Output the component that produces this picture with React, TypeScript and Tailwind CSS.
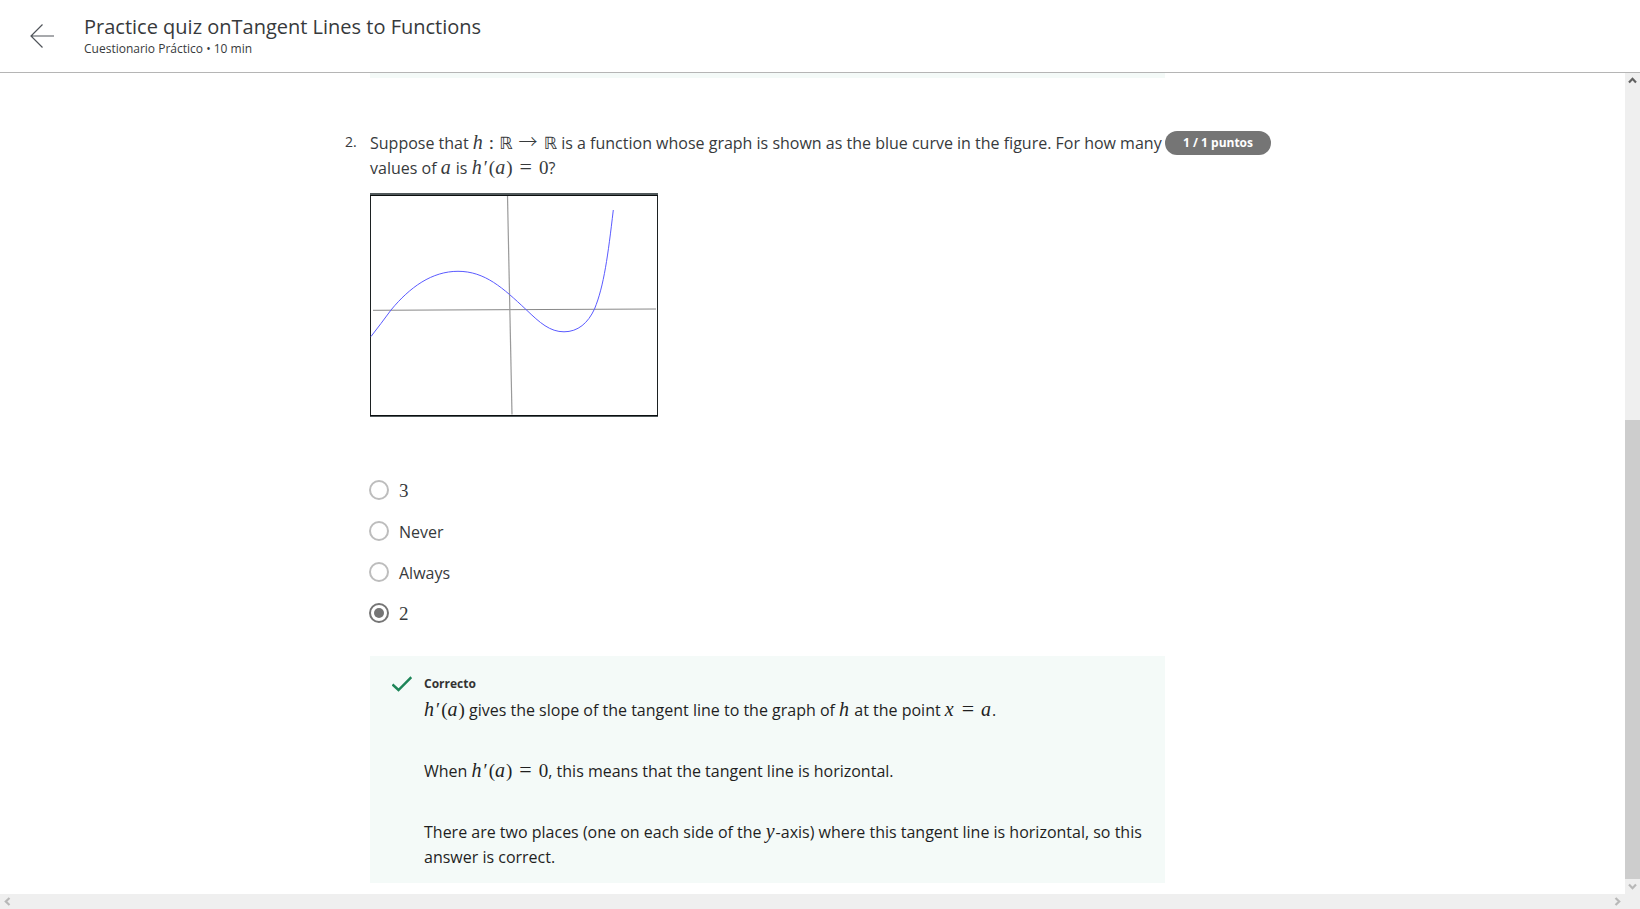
import { ReactNode, useState } from "react";

function Sym({ children }: { children: ReactNode }) {
  return <i className="mr-px font-['Liberation_Serif',serif] text-[20px] leading-none">{children}</i>;
}

function Num({ children }: { children: ReactNode }) {
  return <span className="font-['Liberation_Serif',serif] text-[19px] leading-none">{children}</span>;
}

function Equals() {
  return <span className="mx-[7px] font-['Liberation_Serif',serif] text-[22px] leading-none">=</span>;
}

function Colon() {
  return <span className="mx-[5px] font-['Liberation_Serif',serif] text-[19px] leading-none">:</span>;
}

function Arrow() {
  return <span className="mx-[6px] font-['Noto_Sans_CJK_JP',sans-serif] text-[19px] leading-none font-light">→</span>;
}

function Reals() {
  return <span className="font-['DejaVu_Sans',sans-serif] text-[17px] leading-none">ℝ</span>;
}

function HPrime() {
  return (
    <span className="inline-flex items-baseline whitespace-nowrap">
      <Sym>h</Sym>
      <span className="mx-px">
        <Num>′</Num>
      </span>
      <Num>(</Num>
      <Sym>a</Sym>
      <Num>)</Num>
    </span>
  );
}

function HPrimeZero() {
  return (
    <span className="whitespace-nowrap">
      <HPrime />
      <Equals />
      <Num>0</Num>
    </span>
  );
}

function Graph() {
  return (
    <svg
      role="img"
      aria-label="Graph of h"
      className="mt-3 block h-[224px] w-[288px]"
      viewBox="0 0 288 224"
      fill="none"
    >
      <path d="M0.5 0V224M287.5 0V224" stroke="#1c2122" />
      <path d="M0 1H288M0 223.5H288" stroke="#50585a" strokeWidth="2" />
      <path d="M0 2.5H288M0 222.5H288" stroke="#0b0f10" />
      <path d="M3 117.3L286 116" stroke="#888" />
      <path d="M137.5 3L142 221.500" stroke="#9a9a9a" strokeWidth="1.2" />
      <path
        d="M1 143.500C8 135 14 126 21 117C40 94 62 78.300 88 78.300C115 78.300 133 95 156 116.500C170 130 180 138.800 194 138.800C208 138.800 218 130 224.500 116C234 93 238 62 243.300 17"
        stroke="#5a5aff"
      />
    </svg>
  );
}

const options: { id: string; label: string; math?: boolean }[] = [
  { id: "three", label: "3", math: true },
  { id: "never", label: "Never" },
  { id: "always", label: "Always" },
  { id: "two", label: "2", math: true },
];

function Options() {
  const [selected, setSelected] = useState("two");
  return (
    <fieldset className="-ml-px mt-[63px] flex flex-col gap-[21px]">
      {options.map((o) => (
        <div key={o.id} className="flex h-5 items-center gap-[10px]">
          <input
            id={o.id}
            type="radio"
            name="answer"
            checked={selected === o.id}
            onChange={() => setSelected(o.id)}
            className="size-5 shrink-0 appearance-none rounded-full border-2 border-[#bdbdbd] bg-white bg-clip-content p-[3px] checked:border-[#757575] checked:bg-[#757575]"
          />
          <label htmlFor={o.id} className="pt-0.5">
            {o.math ? <Num>{o.label}</Num> : o.label}
          </label>
        </div>
      ))}
    </fieldset>
  );
}

function Feedback() {
  return (
    <section className="mt-[33px] bg-[#f4faf8] pt-[15px] pr-[14px] pb-[13px] pl-[22px]">
      <div className="flex gap-3">
        <svg className="mt-[5px] h-[16px] w-[20px] shrink-0" viewBox="0 0 20 16" fill="none" aria-hidden="true">
          <path d="M0.500 8.500L6.500 14L19.300 1.200" stroke="#1d8558" strokeWidth="2.400" />
        </svg>
        <div className="flex min-w-0 flex-col gap-px text-[#1f1f1f]">
          <h3 className="text-xs leading-[26px] font-bold text-[#333]">Correcto</h3>
          <div className="flex flex-col gap-9">
            <p>
              <HPrime /> gives the slope of the tangent line to the graph of <Sym>h</Sym> at the point{" "}
              <Sym>x</Sym>
              <Equals />
              <Sym>a</Sym>.
            </p>
            <p>
              When <HPrimeZero />, this means that the tangent line is horizontal.
            </p>
            <p>
              There are two places (one on each side of the <Sym>y</Sym>-axis) where this tangent line is
              horizontal, so this answer is correct.
            </p>
          </div>
        </div>
      </div>
    </section>
  );
}

function Chevron({ d, color }: { d: string; color: string }) {
  return (
    <svg className="size-[9px]" viewBox="0 0 9 9" fill="none" stroke={color} strokeWidth="2.200" aria-hidden="true">
      <path d={d} />
    </svg>
  );
}

function VerticalBar() {
  return (
    <div className="flex w-[15px] shrink-0 flex-col bg-[#efefef]">
      <button aria-label="Scroll up" className="flex h-[15px] items-center justify-center">
        <Chevron d="M1 6.500L4.500 2.800L8 6.500" color="#606060" />
      </button>
      <div className="flex-[332]" />
      <div className="flex-[459] bg-[#cdcdcd]" />
      <button aria-label="Scroll down" className="flex h-[15px] items-center justify-center">
        <Chevron d="M1 2.500L4.500 6.200L8 2.500" color="#b8b8b8" />
      </button>
    </div>
  );
}

function HorizontalBar() {
  return (
    <div className="flex h-[15px] shrink-0 justify-between bg-[#efefef] pr-[15px]">
      <button aria-label="Scroll left" className="flex w-[15px] items-center justify-center">
        <Chevron d="M6.500 1L2.800 4.500L6.500 8" color="#b8b8b8" />
      </button>
      <button aria-label="Scroll right" className="flex w-[15px] items-center justify-center">
        <Chevron d="M2.500 1L6.200 4.500L2.500 8" color="#b8b8b8" />
      </button>
    </div>
  );
}

export default function App() {
  return (
    <div className="flex h-screen flex-col overflow-hidden bg-white font-['Open_Sans',sans-serif] text-base leading-[25px] text-[#373a3c]">
      <header className="flex h-[73px] shrink-0 items-center border-b border-[#b5b5b5] pl-[30px]">
        <a href="#back" aria-label="Back" className="mr-[30px]">
          <svg className="size-6" viewBox="0 0 24 24" fill="none" stroke="#50545a" strokeWidth="1.200" aria-hidden="true">
            <path d="M24 12H1M12.500 0.500L1 12L12.500 23.500" />
          </svg>
        </a>
        <div className="pt-0.5">
          <h1 className="text-xl leading-6">Practice quiz onTangent Lines to Functions</h1>
          <p className="text-xs leading-5">Cuestionario Práctico • 10 min</p>
        </div>
      </header>
      <div className="flex min-h-0 flex-1">
        <main className="min-w-0 flex-1 overflow-hidden">
          <div className="mx-auto grid max-w-[935px] grid-cols-[25px_minmax(0,795px)_auto] items-start">
            <div className="col-start-2 h-[5px] bg-[#f4faf8]" />
            <span className="col-start-1 mt-[51px] text-sm leading-[25px]">2.</span>
            <article className="mt-[53px]">
              <p className="-mr-1">
                Suppose that <Sym>h</Sym>
                <Colon />
                <Reals />
                <Arrow />
                <Reals /> is a function whose graph is shown as the blue curve in the figure. For how many
                values of <Sym>a</Sym> is <HPrimeZero />?
              </p>
              <Graph />
              <Options />
              <Feedback />
            </article>
            <span className="mt-[53px] justify-self-start rounded-full bg-[#757575] px-[18px] text-xs leading-6 font-bold text-white">
              1 / 1 puntos
            </span>
          </div>
        </main>
        <VerticalBar />
      </div>
      <HorizontalBar />
    </div>
  );
}
